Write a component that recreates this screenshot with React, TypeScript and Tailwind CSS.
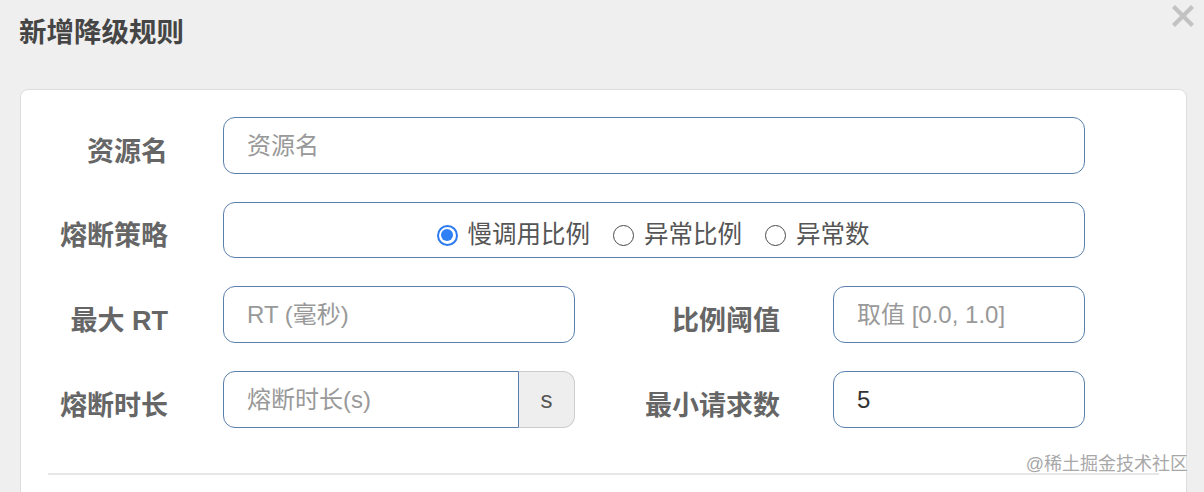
import React from "react";

const font = { fontFamily: '"Liberation Sans", "Noto Sans CJK SC", sans-serif' };

function Label({ children, w }: { children: React.ReactNode; w: string }) {
  return (
    <div className={`${w} shrink-0 pt-[12px] text-right text-[27px] font-bold leading-[36px] text-[#666]`}>{children}</div>
  );
}

function Radio({ checked, label }: { checked?: boolean; label: string }) {
  return (
    <div className="flex items-center">
      {checked ? (
        <span className="flex h-[21px] w-[21px] items-center justify-center rounded-full border-2 border-[#2b7af0] bg-white">
          <span className="h-[12px] w-[12px] rounded-full bg-[#2f80f5]" />
        </span>
      ) : (
        <span className="h-[21px] w-[21px] rounded-full border-[1.5px] border-[#4a4a4a] bg-white" />
      )}
      <span className="ml-[10px] text-[24.5px] leading-[32px] text-[#555]">{label}</span>
    </div>
  );
}

export default function App() {
  return (
    <div style={font} className="relative h-[492px] w-[1204px] overflow-hidden bg-[#efefef]">
      <div className="flex items-start justify-between">
        <div className="pl-[19px] pt-[13px] text-[27.5px] font-bold leading-[40px] text-[#454545]">新增降级规则</div>
        <button className="mr-[9px] mt-[4px]" aria-label="close">
          <svg width="24" height="24" viewBox="0 0 24 24">
            <path d="M2.5 2.5 L21.5 21.5 M21.5 2.5 L2.5 21.5" stroke="#c2c2c2" strokeWidth="4.2" strokeLinecap="butt" />
          </svg>
        </button>
      </div>

      <div className="ml-[20px] mt-[36px] h-[440px] w-[1167px] rounded-[8px] border border-[#dddddd] bg-white pt-[27px]">
        <div className="flex flex-col gap-[28px]">
          <div className="flex items-center">
            <Label w="w-[147px]">资源名</Label>
            <div className="ml-[55px] flex h-[57px] w-[862px] items-center rounded-[12px] border border-[#5a7fab] px-[23px] text-[24px] text-[#999]">
              资源名
            </div>
          </div>

          <div className="flex items-center">
            <Label w="w-[147px]">熔断策略</Label>
            <div className="ml-[55px] flex h-[56px] w-[862px] items-center justify-center gap-[23px] rounded-[12px] border border-[#5a7fab] pt-[10px] pr-[2px]">
              <Radio checked label="慢调用比例" />
              <Radio label="异常比例" />
              <Radio label="异常数" />
            </div>
          </div>

          <div className="flex items-center">
            <Label w="w-[147px]">最大 RT</Label>
            <div className="ml-[55px] flex h-[57px] w-[352px] items-center rounded-[12px] border border-[#5a7fab] px-[23px] text-[24px] text-[#999]">
              RT (毫秒)
            </div>
            <Label w="w-[205px]">比例阈值</Label>
            <div className="ml-[53px] flex h-[57px] w-[252px] items-center rounded-[12px] border border-[#5a7fab] px-[23px] text-[24px] text-[#999]">
              取值 [0.0, 1.0]
            </div>
          </div>

          <div className="flex items-center">
            <Label w="w-[147px]">熔断时长</Label>
            <div className="ml-[55px] flex h-[57px] w-[352px]">
              <div className="flex flex-1 items-center rounded-l-[12px] border border-[#5a7fab] px-[23px] text-[24px] text-[#999]">
                熔断时长(s)
              </div>
              <div className="flex w-[56px] items-center justify-center rounded-r-[12px] border border-l-0 border-[#cccccc] bg-[#eeeeee] text-[24px] text-[#555]">
                s
              </div>
            </div>
            <Label w="w-[205px]">最小请求数</Label>
            <div className="ml-[53px] flex h-[57px] w-[252px] items-center rounded-[12px] border border-[#5a7fab] px-[23px] text-[24px] text-[#333]">
              5
            </div>
          </div>
        </div>

        <div className="mx-[27px] mt-[45px] h-[2px] bg-[#e6e6e6]" />
      </div>

      <div
        className="absolute right-[16px] top-[452px] text-[18px] leading-[24px] text-[#a8a8a8]"
        style={{ textShadow: "0 0 2px #fff, 0 0 2px #fff" }}
      >
        @稀土掘金技术社区
      </div>
    </div>
  );
}
